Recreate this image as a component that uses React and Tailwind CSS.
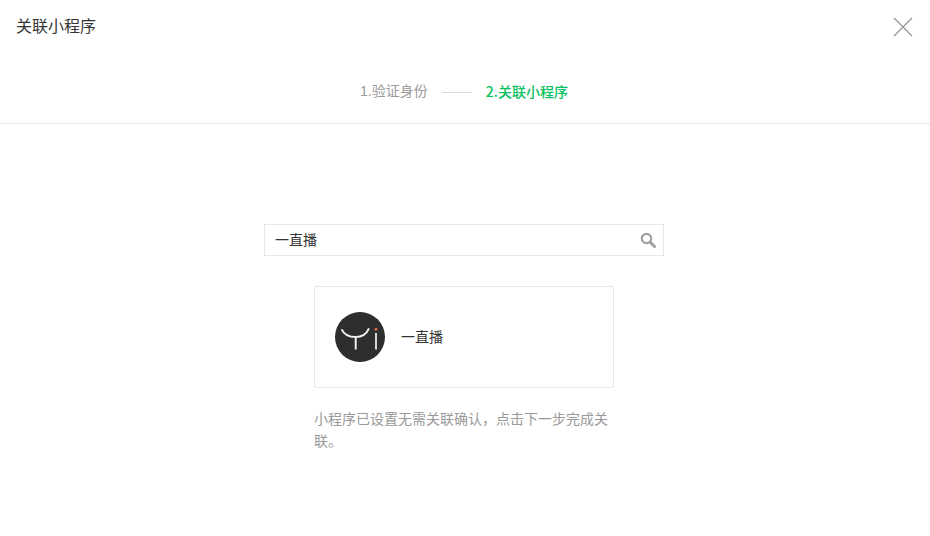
import { useState } from 'react';

function Logo() {
  return (
    <svg width="50" height="50" viewBox="0 0 50 50" className="block">
      <circle cx="25" cy="25" r="25" fill="#2e2e30" />
      <path d="M6.7 17.3 C9 22.5 14.5 25 20.7 25 C27 25 31.5 22 34 16.3 M20.7 25 V37.5" fill="none" stroke="#f4f4f4" strokeWidth="1.9" />
      <path d="M41 21 V37.5" fill="none" stroke="#f4f4f4" strokeWidth="1.7" />
      <circle cx="41" cy="17.3" r="1.4" fill="#e8703a" />
    </svg>
  );
}

export default function App() {
  const [keyword, setKeyword] = useState("一直播");

  return (
    <div className="w-[930px] h-[536px] bg-white text-[#353535] overflow-hidden font-['Liberation_Sans','Noto_Sans_CJK_SC',sans-serif]">
      {/* header */}
      <div className="h-[54px] pl-4 pr-[17px] flex justify-between items-center">
        <h3 className="text-base font-normal">关联小程序</h3>
        <svg width="20" height="20" viewBox="0 0 20 20" className="text-[#9a9a9a]">
          <path d="M1 1 L19 19 M19 1 L1 19" stroke="currentColor" strokeWidth="1.4" fill="none" />
        </svg>
      </div>

      {/* steps */}
      <div className="h-[70px] border-b border-[#e7e7eb] pt-[27px] text-sm leading-5">
        <div className="w-[928px] flex justify-center items-start">
          <span className="text-[#9a9a9a]">1.验证身份</span>
          <span className="w-[30px] h-px bg-[#d9dadc] mx-[14px] mt-[11px]"></span>
          <span className="text-[#07c160] font-medium font-['Noto_Sans_CJK_SC',sans-serif]">2.关联小程序</span>
        </div>
      </div>

      {/* search */}
      <div className="w-[928px] flex flex-col items-center pt-[100px]">
        <div className="w-[400px] h-[32px] border border-[#e7e7eb] flex items-center pl-[10px] pr-[7px]">
          <input
            value={keyword}
            onChange={(e) => setKeyword(e.target.value)}
            className="flex-1 min-w-0 text-sm outline-none bg-transparent"
          />
          <svg width="16" height="16" viewBox="0 0 16 16" className="text-[#a0a0a0]">
            <circle cx="6.5" cy="6.5" r="4.7" fill="none" stroke="currentColor" strokeWidth="2.2" />
            <path d="M10 10 L14.5 14.5" stroke="currentColor" strokeWidth="3" strokeLinecap="round" />
          </svg>
        </div>

        {/* result card */}
        <div className="w-[300px] h-[102px] mt-[30px] border border-[#e7e7eb] rounded-[3px] flex items-center pl-5 gap-4">
          <Logo />
          <span className="text-sm">一直播</span>
        </div>

        <p className="w-[300px] mt-5 text-sm leading-[22px] text-[#9a9a9a]">
          小程序已设置无需关联确认，点击下一步完成关联。
        </p>
      </div>
    </div>
  );
}
